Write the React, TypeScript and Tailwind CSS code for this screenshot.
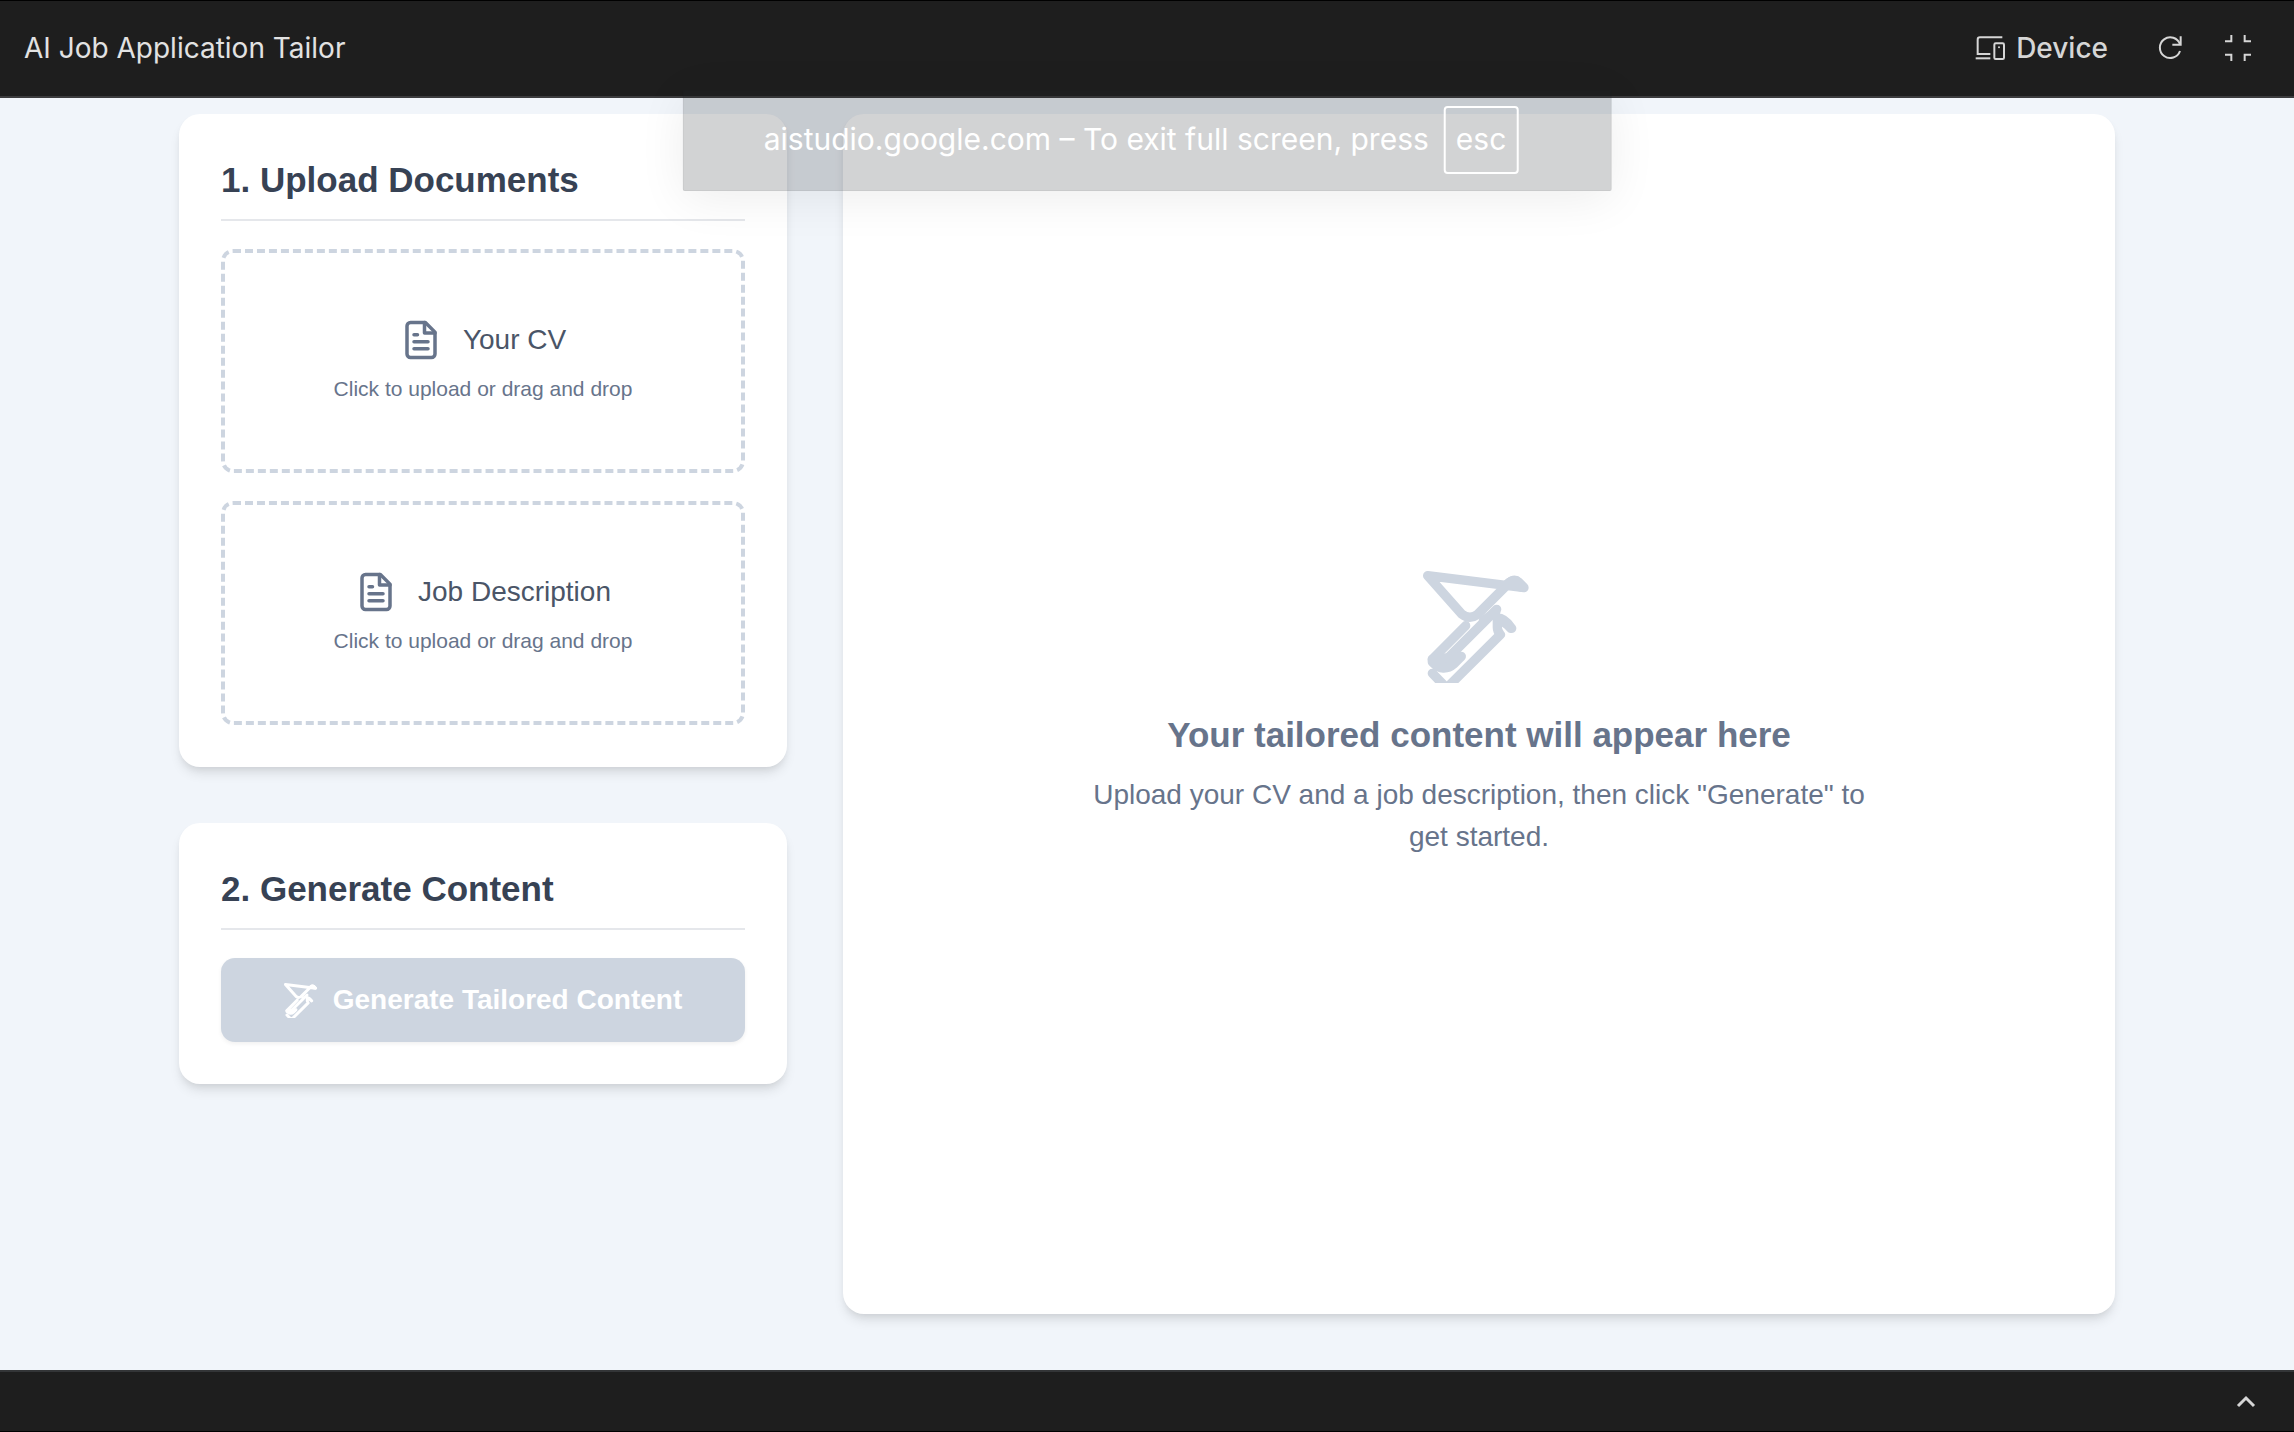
import React from "react";

function DeviceIcon() {
  return (
    <svg viewBox="226 102 90 84" className="h-7 w-[30px]" fill="none" stroke="currentColor" strokeWidth="6" aria-hidden="true">
      <path d="M308 112H241Q234 112 234 119V162H272" />
      <path d="M228 175H272" />
      <rect x="284" y="130" width="29" height="47" rx="4" />
      <circle cx="298" cy="142" r="3" fill="currentColor" stroke="none" />
    </svg>
  );
}

function RefreshIcon() {
  return (
    <svg viewBox="774 108 72 72" className="size-6" fill="none" stroke="currentColor" strokeWidth="6" aria-hidden="true">
      <path d="M840 153A31 31 0 1 1 840 133" />
      <path d="M842 109V134H817" />
    </svg>
  );
}

function ExitFullscreenIcon() {
  return (
    <svg viewBox="975 105 78 78" className="size-[26px]" fill="none" stroke="currentColor" strokeWidth="6" aria-hidden="true">
      <path d="M975 124H994V105M1034 105V124H1053M975 164H994V183M1053 164H1034V183" />
    </svg>
  );
}

function DocumentIcon() {
  return (
    <svg viewBox="0 0 24 24" className="size-[42px] text-[#67748b]" fill="none" stroke="currentColor" strokeWidth="2" strokeLinecap="round" strokeLinejoin="round" aria-hidden="true">
      <path d="M14.5 2H6a2 2 0 0 0-2 2v16a2 2 0 0 0 2 2h12a2 2 0 0 0 2-2V7.5L14.5 2z" />
      <path d="M14 2v6h6M16 13H8M16 17H8M10 9H8" />
    </svg>
  );
}

function SparkIcon({ className }: { className: string }) {
  return (
    <svg viewBox="69 63 336 336" className={className} fill="none" stroke="currentColor" strokeWidth="28" strokeLinecap="round" strokeLinejoin="round" aria-hidden="true">
      <path d="M83 77L186 193Q209 210 232 194L322 104Q341 82 356 97L372 113Z" />
      <path d="M322 102Q340 86 356 97L370 112Z" fill="currentColor" />
      <path d="M197 227L97 328" />
      <path d="M290 178L136 332M250 212L288 184" />
      <path d="M97 328L184 319L160 343Q148 354 132 354Q116 356 97 336Z" fill="currentColor" />
      <path d="M97 370L140 414L301 254Q292 244 292 232V204Q314 204 335 235M296 212Q314 214 332 235" />
    </svg>
  );
}

function Card({ className = "", children }: { className?: string; children: React.ReactNode }) {
  return (
    <section className={`rounded-[21px] bg-white p-[42px] shadow-[0_8px_12px_-2px_rgb(0_0_0/0.1),0_4px_8px_-4px_rgb(0_0_0/0.1)] ${className}`}>
      {children}
    </section>
  );
}

function CardTitle({ children }: { children: React.ReactNode }) {
  return (
    <h2 className="mb-7 border-b-2 border-[#e5e7eb] pb-4 text-[35px] leading-[47px] font-bold text-[#374254]">{children}</h2>
  );
}

function UploadBox({ label }: { label: string }) {
  return (
    <label className="flex h-56 cursor-pointer flex-col items-center justify-center gap-3.5 rounded-xl border-4 border-dashed border-[#cdd5e0]">
      <span className="flex items-center gap-[21px]">
        <DocumentIcon />
        <span className="text-[28px] leading-[42px] text-[#4a5567]">{label}</span>
      </span>
      <span className="text-[21px] leading-7 text-[#67748b]">Click to upload or drag and drop</span>
      <input type="file" className="sr-only" />
    </label>
  );
}

export default function App() {
  return (
    <div className="relative flex min-h-screen flex-col bg-[#f1f5fa] font-['Liberation_Sans',Arial,sans-serif]">
      <header className="flex h-[98px] items-center justify-between border-t border-b-2 border-t-black border-b-[#3c3c3e] bg-[#1e1e1e] pr-[43px] pb-0.5 pl-6 font-[Inter,sans-serif] text-[28px] text-[#d6d6d6]">
        <h1 className="text-[#e2e2e2]">AI Job Application Tailor</h1>
        <div className="flex items-center">
          <button type="button" className="mr-[50px] flex items-center gap-[11px] font-medium">
            <DeviceIcon />
            Device
          </button>
          <button type="button" className="mr-[43px]" aria-label="Reload">
            <RefreshIcon />
          </button>
          <button type="button" aria-label="Exit full screen">
            <ExitFullscreenIcon />
          </button>
        </div>
      </header>

      <main className="mx-auto grid w-full max-w-[2048px] flex-1 grid-cols-3 gap-14 px-14 pt-4 pb-14">
        <div className="flex flex-col gap-14">
          <Card>
            <CardTitle>1. Upload Documents</CardTitle>
            <div className="flex flex-col gap-7">
              <UploadBox label="Your CV" />
              <UploadBox label="Job Description" />
            </div>
          </Card>
          <Card>
            <CardTitle>2. Generate Content</CardTitle>
            <button type="button" className="flex w-full items-center justify-center gap-3.5 rounded-[14px] bg-[#cdd5e0] py-[21px] text-[28px] leading-[42px] font-bold text-white shadow-[0_2px_4px_rgb(0_0_0/0.06)]">
              <SparkIcon className="size-[35px]" />
              Generate Tailored Content
            </button>
          </Card>
        </div>
        <Card className="col-span-2 flex flex-col items-center justify-center text-center text-[#67748b]">
          <SparkIcon className="size-28 text-[#cdd5e0]" />
          <h3 className="mt-7 text-[35px] leading-[47px] font-bold">Your tailored content will appear here</h3>
          <p className="mt-4 max-w-[784px] text-[28px] leading-[42px]">
            Upload your CV and a job description, then click "Generate" to get started.
          </p>
        </Card>
      </main>

      <footer className="flex h-[62px] items-center justify-end border-t-2 border-b border-t-[#333537] border-b-black bg-[#1e1e1e] pr-[38px] text-[#d6d6d6]">
        <button type="button" aria-label="Expand panel">
          <svg viewBox="0 0 20 14" className="h-3.5 w-5" fill="none" stroke="currentColor" strokeWidth="3" aria-hidden="true">
            <path d="M2 11L10 3L18 11" />
          </svg>
        </button>
      </footer>

      <div className="absolute top-[90px] left-1/2 flex h-[101px] -translate-x-1/2 items-center gap-[15px] rounded-[2px] border border-[#202124]/5 bg-[#202128]/20 pr-[92px] pb-0.5 pl-20 font-[Inter,sans-serif] text-[30px] whitespace-nowrap text-white shadow-[0_8px_48px_rgb(0_0_0/0.07)]">
        <span>aistudio.google.com – To exit full screen, press</span>
        <kbd className="flex h-[68px] items-center rounded border-2 border-white px-2.5 font-[Inter,sans-serif]">esc</kbd>
      </div>
    </div>
  );
}
